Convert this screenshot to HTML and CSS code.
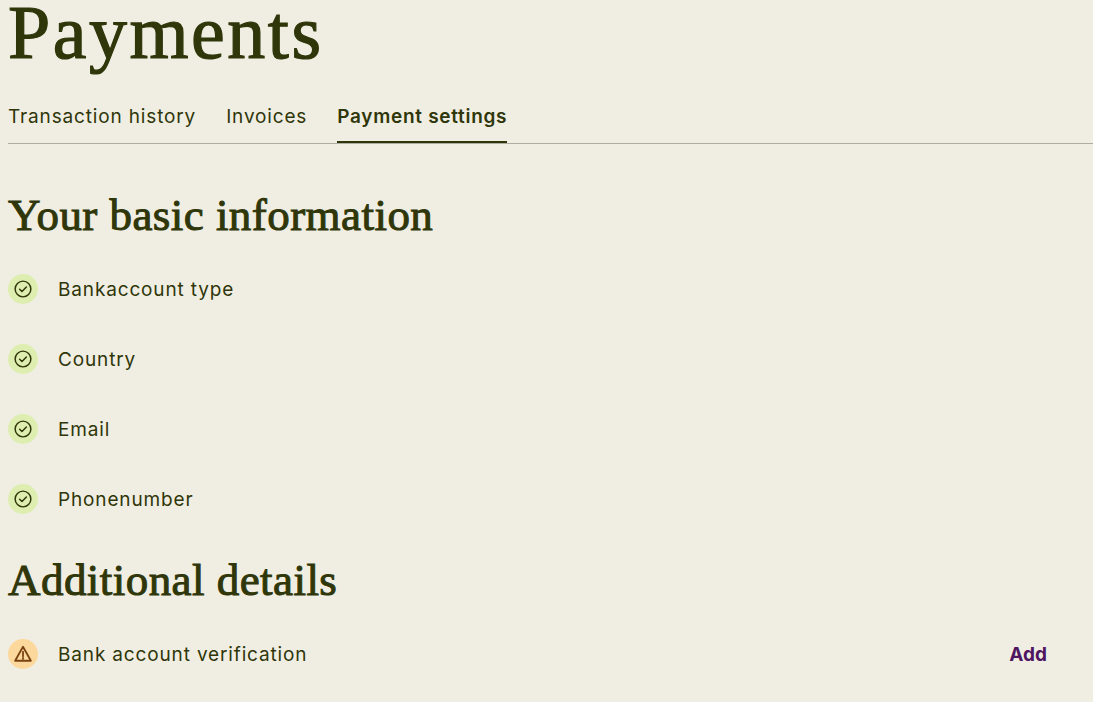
FILE: index.html
```html
<!DOCTYPE html>
<html lang="en">

<head>
    <meta charset="UTF-8">
    <meta name="viewport" content="width=device-width, initial-scale=1.0">
    <title>Payments</title>

    <link rel="stylesheet" href="styles.css">
</head>

<body>
    <h1 class="page-title">Payments</h1>

    <nav class="tabs">
        <a class="tab">Transaction history</a>
        <a class="tab">Invoices</a>
        <a class="tab active">Payment settings</a>
    </nav>

    <section class="info">
        <h2>Your basic information</h2>
        <div class="row">
            <span class="status ok">
                <svg viewBox="0 0 16 16"><circle cx="8" cy="8" r="7"/><path d="M5 8.2l2.1 2.1L11 6.2"/></svg>
            </span>
            <span class="label">Bankaccount type</span>
        </div>
        <div class="row">
            <span class="status ok">
                <svg viewBox="0 0 16 16"><circle cx="8" cy="8" r="7"/><path d="M5 8.2l2.1 2.1L11 6.2"/></svg>
            </span>
            <span class="label">Country</span>
        </div>
        <div class="row">
            <span class="status ok">
                <svg viewBox="0 0 16 16"><circle cx="8" cy="8" r="7"/><path d="M5 8.2l2.1 2.1L11 6.2"/></svg>
            </span>
            <span class="label">Email</span>
        </div>
        <div class="row">
            <span class="status ok">
                <svg viewBox="0 0 16 16"><circle cx="8" cy="8" r="7"/><path d="M5 8.2l2.1 2.1L11 6.2"/></svg>
            </span>
            <span class="label">Phonenumber</span>
        </div>
    </section>

    <section class="additional">
        <h2>Additional details</h2>
        <div class="row">
            <span class="status warn">
                <svg viewBox="0 0 16 16"><path d="M8 1.6L15 14H1z"/><path d="M8 6v4M8 11.4v1"/></svg>
            </span>
            <span class="label">Bank account verification</span>
            <a class="add">Add</a>
        </div>
    </section>
</body>

</html>
```

FILE: styles.css
```css
* {
    box-sizing: border-box;
    margin: 0;
}

body {
    background: #f0eee2;
    color: #2f3609;
    font-family: "Inter", "Liberation Sans", sans-serif;
    padding-left: 8px;
    overflow: hidden;
}

h1,
h2 {
    font-family: "Liberation Serif", serif;
    color: #2f3609;
    font-weight: 400;
}

.page-title {
    font-size: 76px;
    letter-spacing: 2.5px;
    line-height: 64px;
    height: 101px;
    -webkit-text-stroke: 1.2px #2f3609;
}

.tabs {
    display: flex;
    gap: 30px;
    height: 43px;
    border-bottom: 1px solid #aeada2;
}

.tab {
    font-size: 19px;
    line-height: 32px;
    letter-spacing: 0.85px;
    color: #2f3609;
}

.tab.active {
    font-weight: 600;
    letter-spacing: 0.7px;
    height: 42px;
    border-bottom: 2px solid #2f3609;
}

h2 {
    font-size: 45px;
    line-height: 50px;
    letter-spacing: 0.45px;
    -webkit-text-stroke: 1px #2f3609;
}

.info h2 {
    margin-top: 46px;
    margin-bottom: 14px;
}

.additional h2 {
    margin-top: 21px;
    margin-bottom: 14px;
}

.row {
    display: flex;
    align-items: center;
    height: 70px;
}

.status {
    width: 30px;
    height: 30px;
    border-radius: 50%;
    display: flex;
    align-items: center;
    justify-content: center;
    margin-right: 20px;
}

.status svg {
    width: 18px;
    height: 18px;
    fill: none;
    stroke-width: 1.3;
    stroke-linecap: round;
    stroke-linejoin: round;
}

.status.ok {
    background: #ddeeb0;
}

.status.ok svg {
    stroke: #2f3609;
}

.status.warn {
    background: #fdd89c;
}

.status.warn svg {
    stroke: #7a4312;
    stroke-width: 1.6;
}

.label {
    font-size: 19px;
    letter-spacing: 0.85px;
    color: #2f3609;
}

.add {
    margin-left: auto;
    margin-right: 46px;
    font-size: 19px;
    font-weight: 700;
    color: #4f1560;
}
```
